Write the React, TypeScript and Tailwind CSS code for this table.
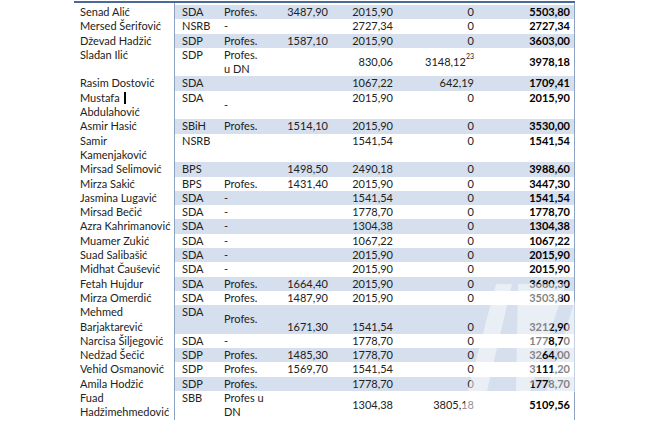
import React from 'react';

type VAlign = 'top' | 'mid' | 'bot';

type Row = {
  name: string[];
  party: string;
  prof?: string[];
  profAt?: VAlign;
  a?: string;
  b: string;
  c: string;
  sup?: string;
  total: string;
  numAt?: VAlign;
  cursor?: boolean;
};

const rows: Row[] = [
  {name: ['Senad Alić'], party: 'SDA', prof: ['Profes.'], a: '3487,90', b: '2015,90', c: '0', total: '5503,80'},
  {name: ['Mersed Šerifović'], party: 'NSRB', prof: ['-'], b: '2727,34', c: '0', total: '2727,34'},
  {name: ['Dževad Hadžić'], party: 'SDP', prof: ['Profes.'], a: '1587,10', b: '2015,90', c: '0', total: '3603,00'},
  {name: ['Slađan Ilić', ''], party: 'SDP', prof: ['Profes.', 'u DN'], b: '830,06', c: '3148,12', sup: '23', total: '3978,18', numAt: 'mid'},
  {name: ['Rasim Dostović'], party: 'SDA', b: '1067,22', c: '642,19', total: '1709,41'},
  {name: ['Mustafa', 'Abdulahović'], party: 'SDA', prof: ['-'], profAt: 'mid', b: '2015,90', c: '0', total: '2015,90', numAt: 'top', cursor: true},
  {name: ['Asmir Hasić'], party: 'SBiH', prof: ['Profes.'], a: '1514,10', b: '2015,90', c: '0', total: '3530,00'},
  {name: ['Samir', 'Kamenjaković'], party: 'NSRB', b: '1541,54', c: '0', total: '1541,54', numAt: 'top'},
  {name: ['Mirsad Selimović'], party: 'BPS', a: '1498,50', b: '2490,18', c: '0', total: '3988,60'},
  {name: ['Mirza Sakić'], party: 'BPS', prof: ['Profes.'], a: '1431,40', b: '2015,90', c: '0', total: '3447,30'},
  {name: ['Jasmina Lugavić'], party: 'SDA', prof: ['-'], b: '1541,54', c: '0', total: '1541,54'},
  {name: ['Mirsad Bečić'], party: 'SDA', prof: ['-'], b: '1778,70', c: '0', total: '1778,70'},
  {name: ['Azra Kahrimanović'], party: 'SDA', prof: ['-'], b: '1304,38', c: '0', total: '1304,38'},
  {name: ['Muamer Zukić'], party: 'SDA', prof: ['-'], b: '1067,22', c: '0', total: '1067,22'},
  {name: ['Suad Salibašić'], party: 'SDA', prof: ['-'], b: '2015,90', c: '0', total: '2015,90'},
  {name: ['Midhat Čaušević'], party: 'SDA', prof: ['-'], b: '2015,90', c: '0', total: '2015,90'},
  {name: ['Fetah Hujdur'], party: 'SDA', prof: ['Profes.'], a: '1664,40', b: '2015,90', c: '0', total: '3680,30'},
  {name: ['Mirza Omerdić'], party: 'SDA', prof: ['Profes.'], a: '1487,90', b: '2015,90', c: '0', total: '3503,80'},
  {name: ['Mehmed', 'Barjaktarević'], party: 'SDA', prof: ['Profes.'], profAt: 'mid', a: '1671,30', b: '1541,54', c: '0', total: '3212,90', numAt: 'bot'},
  {name: ['Narcisa Šiljegović'], party: 'SDA', prof: ['-'], b: '1778,70', c: '0', total: '1778,70'},
  {name: ['Nedžad Šečić'], party: 'SDP', prof: ['Profes.'], a: '1485,30', b: '1778,70', c: '0', total: '3264,00'},
  {name: ['Vehid Osmanović'], party: 'SDP', prof: ['Profes.'], a: '1569,70', b: '1541,54', c: '0', total: '3111,20'},
  {name: ['Amila Hodžić'], party: 'SDP', prof: ['Profes.'], b: '1778,70', c: '0', total: '1778,70'},
  {name: ['Fuad', 'Hadžimehmedović'], party: 'SBB', prof: ['Profes u', 'DN'], b: '1304,38', c: '3805,18', total: '5109,56', numAt: 'mid'}
];

const justify: Record<VAlign, string> = {
  top: 'justify-start',
  mid: 'justify-center',
  bot: 'justify-end'
};

const Cell: React.FC<{className: string; at?: VAlign; children?: React.ReactNode}> = ({className, at = 'top', children}) => (
  <div className={`flex flex-col ${justify[at]} ${className}`}>{children}</div>
);

const TableRow: React.FC<{row: Row; shaded: boolean}> = ({row, shaded}) => {
  const tall = row.name.length > 1 || (row.prof?.length ?? 0) > 1;
  const numAt = row.numAt ?? 'top';
  return (
    <div className={`flex ${tall ? 'h-[28.6px]' : 'h-[14.3px]'}`}>
      <Cell className="w-[100px] pl-[6px] bg-white">
        {row.name.map((n, i) => (
          <div key={i} className="h-[14.3px] whitespace-nowrap flex items-center">
            {n}
            {row.cursor && i === 0 && <span className="ml-[4px] inline-block w-[2px] h-[12px] bg-black" />}
          </div>
        ))}
      </Cell>
      <div className={`flex flex-1 border-l border-r border-[#8da3c3] ${shaded ? 'bg-[#d5dfed]' : 'bg-white'}`}>
        <Cell className="w-[48px] pl-[7px]">
          <div className="h-[14.3px] flex items-center">{row.party}</div>
        </Cell>
        <Cell className="w-[60px] pl-[1px]" at={row.profAt ?? 'top'}>
          {row.prof?.map((p, i) => (
            <div key={i} className="h-[14.3px] flex items-center whitespace-nowrap">{p}</div>
          ))}
        </Cell>
        <Cell className="w-[45px] items-end" at={numAt}>
          <div className="h-[14.3px] flex items-center">{row.a}</div>
        </Cell>
        <Cell className="w-[65px] items-end" at={numAt}>
          <div className="h-[14.3px] flex items-center">{row.b}</div>
        </Cell>
        <Cell className="w-[81px] items-end" at={numAt}>
          <div className="h-[14.3px] flex items-center">
            {row.c}
            {row.sup && <sup className="text-[7px] leading-none -mt-[5px]">{row.sup}</sup>}
          </div>
        </Cell>
        <Cell className="w-[96px] items-end font-bold text-black" at={numAt}>
          <div className="h-[14.3px] flex items-center">{row.total}</div>
        </Cell>
      </div>
    </div>
  );
};

// faded logo stamped over the lower right corner
const Watermark: React.FC = () => (
  <svg className="absolute inset-0 pointer-events-none" width="650" height="421" viewBox="0 0 650 421">
    <g fill="#ffffff" opacity="0.5">
      <polygon points="460,421 480,421 512,284 496,284" />
      <polygon points="516,392 518,284 566,284 530,392" />
      <polygon points="546,392 580,284 584,284 584,392" />
    </g>
  </svg>
);

const App: React.FC = () => (
  <div className="relative w-[650px] h-[421px] bg-white overflow-hidden text-[11px] leading-[14.3px] text-[#222] font-['Lato','Liberation_Sans',sans-serif]">
    <div className="ml-[74px] w-[501px] pt-[1px]">
      <div className="h-[2px] bg-[#4a6a9a]" />
      <div className="h-[2px] flex">
        <div className="w-[100px]" />
        <div className="flex-1 border-l border-r border-[#8da3c3]" />
      </div>
      {rows.map((r, i) => (
        <TableRow key={i} row={r} shaded={i % 2 === 0} />
      ))}
    </div>
    <Watermark />
  </div>
);

export default App;
